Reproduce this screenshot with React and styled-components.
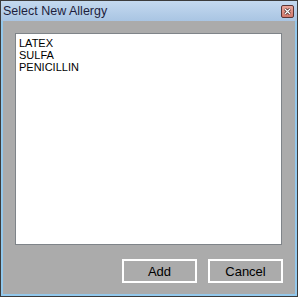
import React from "react";
import styled, { createGlobalStyle } from "styled-components";

const Global = createGlobalStyle`
  html, body { margin: 0; padding: 0; background: #ababab; }
  body { font-family: "Liberation Sans", Arial, sans-serif; }
`;

const Window = styled.div`
  width: 298px;
  height: 297px;
  box-sizing: border-box;
  border: 1px solid #3c3c3c;
  display: flex;
  flex-direction: column;
  background: #ababab;
`;

const TitleBar = styled.div`
  height: 20px;
  flex: none;
  display: flex;
  align-items: center;
  justify-content: space-between;
  padding: 0 3px 0 2px;
  background: linear-gradient(#c4d9ef, #a9c5e3);
`;

const Title = styled.span`
  font-size: 12.5px;
  color: #1e1e3c;
`;

const CloseButton = styled.div`
  width: 11px;
  height: 11px;
  border: 1px solid #5a3434;
  border-radius: 2px;
  background: linear-gradient(#e9a79c, #d3786b);
  display: flex;
  align-items: center;
  justify-content: center;
  margin-top: 1px;
`;

const Body = styled.div`
  flex: 1;
  display: flex;
  flex-direction: column;
  border: 2px solid #93c8ec;
  border-top: none;
  padding: 12px 13px 8px 12px;
  background: #ababab;
`;

const ListBox = styled.div`
  height: 212px;
  box-sizing: border-box;
  border: 1px solid #7f8489;
  background: #fff;
  padding: 3px 3px;
`;

const Item = styled.div`
  font-size: 11px;
  line-height: 12px;
  color: #000;
`;

const ButtonRow = styled.div`
  display: flex;
  justify-content: flex-end;
  gap: 11px;
  margin-top: 14px;
  margin-right: -1px;
`;

const Button = styled.div`
  width: 75px;
  height: 24px;
  box-sizing: border-box;
  border: 2px solid #fff;
  background: #ababab;
  display: flex;
  align-items: center;
  justify-content: center;
  font-size: 13px;
  color: #000;
`;

export default function App() {
  return (
    <>
      <Global />
      <Window>
        <TitleBar>
          <Title>Select New Allergy</Title>
          <CloseButton>
            <svg width="7" height="7" viewBox="0 0 7 7">
              <path d="M1 1L6 6M6 1L1 6" stroke="#3a2020" strokeWidth="2.6" />
              <path d="M1 1L6 6M6 1L1 6" stroke="#fff" strokeWidth="1.3" />
            </svg>
          </CloseButton>
        </TitleBar>
        <Body>
          <ListBox>
            <Item>LATEX</Item>
            <Item>SULFA</Item>
            <Item>PENICILLIN</Item>
          </ListBox>
          <ButtonRow>
            <Button>Add</Button>
            <Button>Cancel</Button>
          </ButtonRow>
        </Body>
      </Window>
    </>
  );
}
